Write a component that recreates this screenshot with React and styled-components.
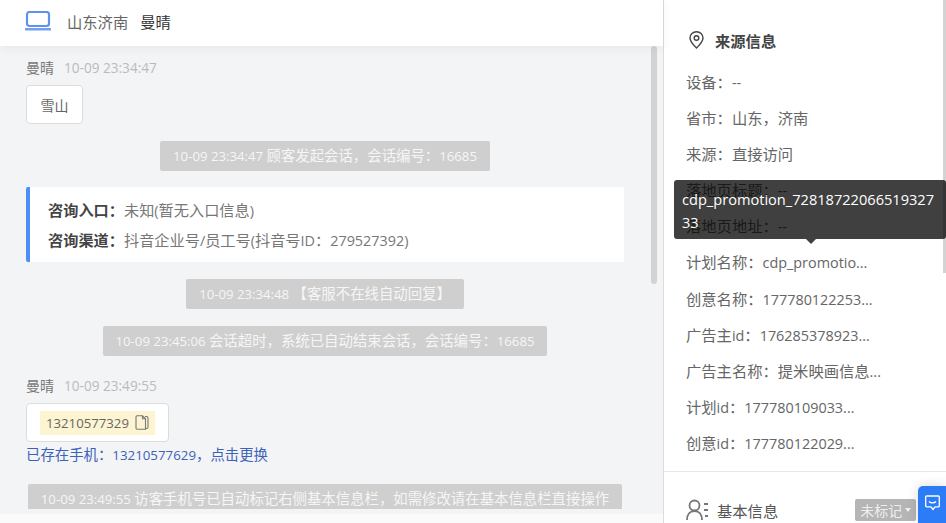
import React from 'react';
import styled, { createGlobalStyle } from 'styled-components';

const GlobalStyle = createGlobalStyle`
  html, body {
    margin: 0;
    padding: 0;
    height: 100%;
    overflow: hidden;
    background: #fff;
  }
  * {
    box-sizing: border-box;
  }
  body {
    font-family: 'Open Sans', 'Noto Sans CJK SC', sans-serif;
    font-size: 14px;
    color: #666;
  }
`;

const Page = styled.div`
  position: relative;
  width: 946px;
  height: 523px;
  display: flex;
  overflow: hidden;
`;

const ChatPane = styled.div`
  width: 664px;
  height: 523px;
  display: flex;
  flex-direction: column;
  background: #f3f4f6;
  border-right: 1px solid #dcdcdc;
`;

const Header = styled.div`
  height: 46px;
  flex: none;
  display: flex;
  align-items: center;
  padding: 0 0 4px 25px;
  background: #fff;
  box-shadow: 0 2px 10px rgba(0, 0, 0, 0.06);
  font-size: 15.3px;
  position: relative;
  z-index: 1;
`;

const Place = styled.span`
  margin-left: 16px;
  color: #666;
`;

const HeaderName = styled.span`
  margin-left: 12px;
  color: #333;
`;

const ChatBody = styled.div`
  height: 463px;
  flex: none;
  display: flex;
  overflow: hidden;
`;

const Messages = styled.div`
  width: 650px;
  height: 463px;
  padding: 12px 0 0 26px;
  overflow: hidden;
`;

const ScrollTrack = styled.div`
  width: 13px;
  padding-left: 1px;
`;

const ScrollThumb = styled.div`
  width: 6px;
  height: ${(p) => p.$height}px;
  background: #d3d3d3;
  border-radius: 3px;
`;

const Footer = styled.div`
  flex: 1;
  background: #fafafa;
  margin-top: 5px;
`;

const MessageMeta = styled.div`
  height: 20px;
  line-height: 20px;
  color: #777;
  font-size: 14px;
`;

const MetaTime = styled.span`
  margin-left: 10px;
  color: #bbb;
  font-size: 13.6px;
`;

const Bubble = styled.div`
  display: inline-flex;
  align-items: center;
  height: 39px;
  margin-top: 7px;
  padding: 0 ${(p) => p.$pad}px;
  background: #fff;
  border: 1px solid #dcdcdc;
  border-radius: 4px;
  font-size: 14px;
  color: #666;
`;

const PhoneMark = styled.span`
  display: inline-flex;
  align-items: center;
  gap: 6px;
  height: 24px;
  padding: 0 6px;
  background: #fdf4d2;
  color: #666;
  font-size: 13.2px;
`;

const PhoneHint = styled.div`
  height: 20px;
  line-height: 20px;
  margin-top: 3px;
  color: #3c62b8;
  font-size: 14.4px;
`;

const SystemRow = styled.div`
  width: 598px;
  display: flex;
  justify-content: center;
  margin-top: ${(p) => p.$top}px;
`;

const SystemNote = styled.div`
  height: 30px;
  line-height: 30px;
  padding: 0 13px;
  background: #cfcfcf;
  border-radius: 2px;
  color: #f6f6f6;
  font-size: 14.4px;
  white-space: nowrap;
`;

const LatinRun = styled.span`
  font-size: ${(p) => p.$size}px;
`;

const InfoCard = styled.div`
  width: 598px;
  height: 75px;
  margin-top: 16px;
  padding: 8px 0 0 18px;
  background: #fff;
  border-left: 4px solid #4e8ef7;
  border-radius: 2px 0 0 2px;
`;

const InfoLine = styled.div`
  height: 30px;
  line-height: 30px;
  font-size: 15.2px;
  color: #777;
`;

const InfoLabel = styled.b`
  color: #444;
  font-weight: 700;
`;

const MessageGroup = styled.div`
  margin-top: ${(p) => p.$top}px;
`;

const Side = styled.div`
  position: relative;
  flex: 1;
  height: 523px;
  background: #fff;
`;

const SideScroll = styled.div`
  position: absolute;
  top: 0;
  right: 0;
  width: 3px;
  height: 273px;
  background: #d3d3d3;
`;

const SourceTitle = styled.div`
  display: flex;
  align-items: center;
  height: 20px;
  margin: 30px 0 0 25px;
  font-size: 15.3px;
  font-weight: 700;
  color: #444;
`;

const TitleText = styled.span`
  margin-left: 11px;
`;

const Fields = styled.div`
  margin: 14px 0 0 22px;
`;

const Field = styled.div`
  height: 36.1px;
  line-height: 36.1px;
  font-size: 15.3px;
  color: #666;
  white-space: nowrap;
`;

const Divider = styled.div`
  height: 1px;
  margin-top: 10px;
  background: #e8e8e8;
`;

const BaseRow = styled.div`
  display: flex;
  align-items: center;
  height: 24px;
  margin: 26px 0 0 22px;
  font-size: 15.3px;
  color: #555;
`;

const BaseTitle = styled.span`
  margin-left: 8px;
`;

const MarkTag = styled.span`
  display: inline-flex;
  align-items: center;
  gap: 3px;
  height: 22px;
  margin-left: 77px;
  padding: 0 5px;
  background: #b5b5b5;
  border-radius: 2px;
  color: #eee;
  font-size: 14px;
  white-space: nowrap;
`;

const Caret = styled.i`
  width: 0;
  height: 0;
  border-left: 3px solid transparent;
  border-right: 3px solid transparent;
  border-top: 4px solid #eee;
`;

const Tooltip = styled.div`
  position: absolute;
  left: 10px;
  top: 180px;
  width: 272px;
  height: 59px;
  padding: 8px 8px 0;
  background: rgba(0, 0, 0, 0.75);
  border-radius: 3px;
  color: #fff;
  font-size: 14.6px;
  line-height: 23px;
  word-break: break-all;
  &::after {
    content: '';
    position: absolute;
    left: 132px;
    top: 59px;
    border-left: 5px solid transparent;
    border-right: 5px solid transparent;
    border-top: 5px solid rgba(0, 0, 0, 0.75);
  }
`;

const ChatButton = styled.div`
  position: absolute;
  right: 0;
  bottom: 0;
  width: 28px;
  height: 37px;
  display: flex;
  justify-content: center;
  padding-top: 9px;
  background: #2b7cf6;
  border-radius: 5px 0 0 0;
  box-shadow: 0 0 12px rgba(0, 0, 0, 0.15);
`;

// the original font has narrower latin than cjk, so latin runs get their own size
const Mixed = ({ text, size }) =>
  text.split(/([\x20-\x7e]+)/).map((part, i) =>
    i % 2 ? (
      <LatinRun key={i} $size={size}>
        {part}
      </LatinRun>
    ) : (
      part
    )
  );

const LaptopIcon = () => (
  <svg width="26" height="20" viewBox="0 0 26 20" fill="none">
    <rect x="2" y="1" width="22" height="14" rx="2.5" stroke="#5b93ee" strokeWidth="2.2" fill="#fff" />
    <rect x="0" y="17" width="26" height="2.5" rx="0.5" fill="#6fa1f0" />
  </svg>
);

const PinIcon = () => (
  <svg width="15" height="18" viewBox="0 0 15 18" fill="none" stroke="#444" strokeWidth="1.4">
    <path d="M7.5 17 C4 13.6 1 10.6 1 7 A6.5 6.3 0 0 1 14 7 C14 10.6 11 13.6 7.5 17 Z" />
    <circle cx="7.5" cy="7" r="2.3" />
  </svg>
);

const CopyIcon = () => (
  <svg width="14" height="15" viewBox="0 0 14 15" fill="none" stroke="#777" strokeWidth="1.1">
    <path d="M10 1.5 H11.5 A1.5 1.5 0 0 1 13 3 V12 A1.5 1.5 0 0 1 11.5 13.5 H10" />
    <path d="M2 0.8 H7.5 L10.5 3.8 V14.2 H2 A1 1 0 0 1 1 13.2 V1.8 A1 1 0 0 1 2 0.8 Z" />
    <path d="M7.5 0.8 V3.8 H10.5" />
  </svg>
);

const PersonListIcon = () => (
  <svg width="23" height="22" viewBox="0 0 23 22" fill="none" stroke="#777" strokeWidth="1.8">
    <circle cx="8.5" cy="6.5" r="5" />
    <path d="M1 21 C1 15.5 4 12 8.5 12 C13 12 16 15.5 16 21" />
    <path d="M18 5 H22 M18 11 H22 M19 17 H22" />
  </svg>
);

const ChatIcon = () => (
  <svg width="15" height="16" viewBox="0 0 15 16" fill="none" stroke="#fff" strokeWidth="1.3">
    <path d="M1.6 1 H13.4 A0.9 0.9 0 0 1 14.3 1.9 V11 A0.9 0.9 0 0 1 13.4 11.9 H10 L8 14.5 L6 11.9 H1.6 A0.9 0.9 0 0 1 0.7 11 V1.9 A0.9 0.9 0 0 1 1.6 1 Z" />
    <path d="M4 6.5 C5.5 8.3 9.5 8.3 11 6.5" />
  </svg>
);

const sourceFields = [
  '设备：--',
  '省市：山东，济南',
  '来源：直接访问',
  '落地页标题：--',
  '落地页地址：--',
  '计划名称：cdp_promotio...',
  '创意名称：177780122253...',
  '广告主id：176285378923...',
  '广告主名称：提米映画信息...',
  '计划id：177780109033...',
  '创意id：177780122029...',
];

const Note = ({ top, text }) => (
  <SystemRow $top={top}>
    <SystemNote>
      <Mixed text={text} size={13.2} />
    </SystemNote>
  </SystemRow>
);

const App = () => (
  <Page>
    <GlobalStyle />
    <ChatPane>
      <Header>
        <LaptopIcon />
        <Place>山东济南</Place>
        <HeaderName>曼晴</HeaderName>
      </Header>
      <ChatBody>
        <Messages>
          <MessageMeta>
            曼晴<MetaTime>10-09 23:34:47</MetaTime>
          </MessageMeta>
          <Bubble $pad={13.5}>雪山</Bubble>
          <Note top={17} text="10-09 23:34:47 顾客发起会话，会话编号：16685" />
          <InfoCard>
            <InfoLine>
              <InfoLabel>咨询入口：</InfoLabel>
              <Mixed text="未知(暂无入口信息)" size={14.4} />
            </InfoLine>
            <InfoLine>
              <InfoLabel>咨询渠道：</InfoLabel>
              <Mixed text="抖音企业号/员工号(抖音号ID：279527392)" size={14.4} />
            </InfoLine>
          </InfoCard>
          <Note top={17} text="10-09 23:34:48 【客服不在线自动回复】" />
          <Note top={17} text="10-09 23:45:06 会话超时，系统已自动结束会话，会话编号：16685" />
          <MessageGroup $top={20}>
            <MessageMeta>
              曼晴<MetaTime>10-09 23:49:55</MetaTime>
            </MessageMeta>
            <Bubble $pad={13}>
              <PhoneMark>
                13210577329
                <CopyIcon />
              </PhoneMark>
            </Bubble>
            <PhoneHint>
              <Mixed text="已存在手机：13210577629，点击更换" size={13.3} />
            </PhoneHint>
          </MessageGroup>
          <Note top={19} text="10-09 23:49:55 访客手机号已自动标记右侧基本信息栏，如需修改请在基本信息栏直接操作" />
        </Messages>
        <ScrollTrack>
          <ScrollThumb $height={238} />
        </ScrollTrack>
      </ChatBody>
      <Footer />
    </ChatPane>
    <Side>
      <SideScroll />
      <SourceTitle>
        <PinIcon />
        <TitleText>来源信息</TitleText>
      </SourceTitle>
      <Fields>
        {sourceFields.map((text) => (
          <Field key={text}>
            <Mixed text={text} size={14.4} />
          </Field>
        ))}
      </Fields>
      <Divider />
      <BaseRow>
        <PersonListIcon />
        <BaseTitle>基本信息</BaseTitle>
        <MarkTag>
          未标记
          <Caret />
        </MarkTag>
      </BaseRow>
      <Tooltip>cdp_promotion_7281872206651932733</Tooltip>
      <ChatButton>
        <ChatIcon />
      </ChatButton>
    </Side>
  </Page>
);

export default App;
